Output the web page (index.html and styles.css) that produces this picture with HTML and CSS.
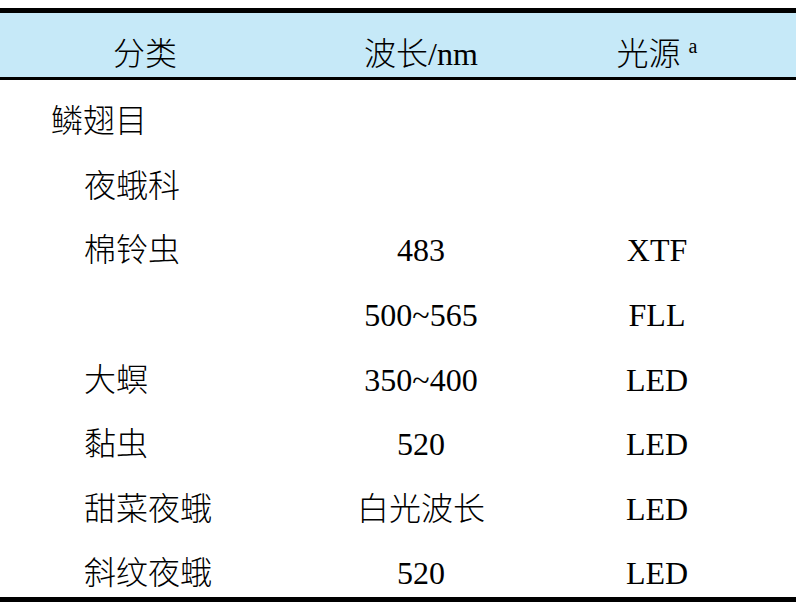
FILE: index.html
```html
<!DOCTYPE html>
<html lang="zh-CN">
<head>
<meta charset="utf-8">
<title>光源波长</title>
<link rel="stylesheet" href="styles.css">
</head>
<body>
<div class="tbl">
  <div class="head">
    <div class="cell c1">分类</div>
    <div class="cell c2">波长/nm</div>
    <div class="cell c3">光源 <sup class="note">a</sup></div>
  </div>
  <div class="row">
    <div class="cell c1 lv1">鳞翅目</div>
    <div class="cell c2"></div>
    <div class="cell c3"></div>
  </div>
  <div class="row">
    <div class="cell c1 lv2">夜蛾科</div>
    <div class="cell c2"></div>
    <div class="cell c3"></div>
  </div>
  <div class="row">
    <div class="cell c1 lv2">棉铃虫</div>
    <div class="cell c2">483</div>
    <div class="cell c3">XTF</div>
  </div>
  <div class="row">
    <div class="cell c1 lv2"></div>
    <div class="cell c2">500~565</div>
    <div class="cell c3">FLL</div>
  </div>
  <div class="row">
    <div class="cell c1 lv2">大螟</div>
    <div class="cell c2">350~400</div>
    <div class="cell c3">LED</div>
  </div>
  <div class="row">
    <div class="cell c1 lv2">黏虫</div>
    <div class="cell c2">520</div>
    <div class="cell c3">LED</div>
  </div>
  <div class="row">
    <div class="cell c1 lv2">甜菜夜蛾</div>
    <div class="cell c2">白光波长</div>
    <div class="cell c3">LED</div>
  </div>
  <div class="row">
    <div class="cell c1 lv2">斜纹夜蛾</div>
    <div class="cell c2">520</div>
    <div class="cell c3">LED</div>
  </div>
</div>
</body>
</html>
```

FILE: styles.css
```css
html, body {
  background: #ffffff;
}
body {
  margin: 8px 0 0 0;
  font-family: "Liberation Serif", "Noto Sans CJK SC", serif;
  font-size: 32px;
  font-weight: 300;
  color: #000000;
}
.tbl {
  width: 796px;
  border-top: 5px solid #000000;
  border-bottom: 5px solid #000000;
}
.head,
.row {
  display: grid;
  grid-template-columns: 290px 262px 1fr;
  box-sizing: border-box;
}
.head {
  height: 67px;
  background: #c6e9f8;
  border-bottom: 3px solid #000000;
}
.row {
  height: 64.625px;
}
.cell {
  line-height: 32px;
  white-space: nowrap;
}
.head .cell {
  padding-top: 25px;
}
.row .cell {
  padding-top: 25px;
}
.c1 {
  text-align: center;
}
.c2 {
  text-align: center;
}
.c3 {
  text-align: center;
  padding-right: 34px;
}
.lv1 {
  text-align: left;
  padding-left: 51px;
}
.lv2 {
  text-align: left;
  padding-left: 84px;
}
.note {
  font-size: 20px;
  line-height: 0;
  vertical-align: 12px;
}
```
